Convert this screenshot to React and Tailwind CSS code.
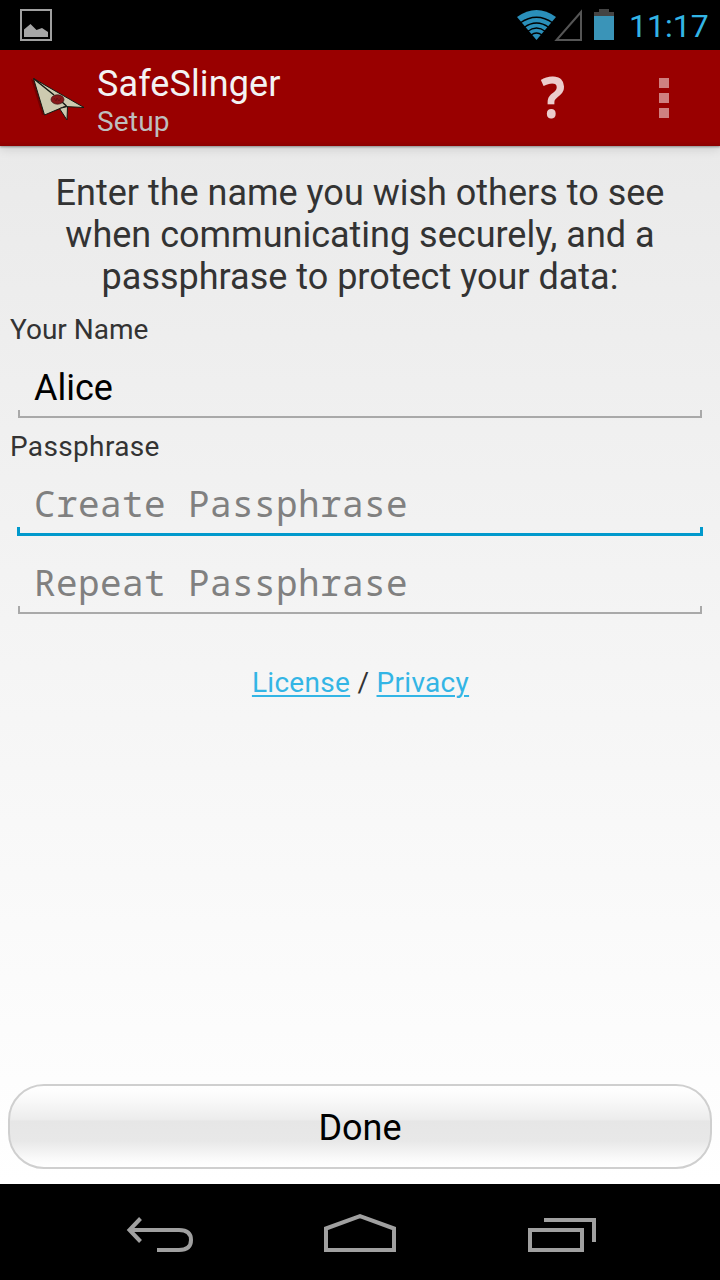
import React from "react";

function StatusBar() {
  return (
    <div className="flex h-[50px] shrink-0 items-center justify-between bg-black pl-5 pr-3">
      <svg width="32" height="32" viewBox="0 0 32 32">
        <rect x="1" y="1" width="30" height="30" fill="none" stroke="#a0a0a0" strokeWidth="2" />
        <path d="M4 28V20.500L10.500 15L16.500 21L22 19L28 23V28Z" fill="#a6a6a6" />
      </svg>
      <div className="flex items-center">
        <svg width="100" height="50" viewBox="0 0 100 50">
          <path d="M0 17Q19.500 3 39 17L19.500 40Z" fill="#2a8fba" />
          <g fill="none" stroke="#000" strokeWidth="1.300">
            <path d="M3 23Q19.500 11.500 36 23" />
            <path d="M7 27.500Q19.500 18.500 32 27.500" />
            <path d="M10.500 31.500Q19.500 24.500 28.500 31.500" />
            <path d="M14 35Q19.500 31 25 35" />
          </g>
          <path d="M64 12V40H39.500Z" fill="none" stroke="#555" strokeWidth="2" />
          <path d="M77 16V12H82V9H92V12H97V16Z" fill="#444" />
          <rect x="77" y="16" width="20" height="24" fill="#3a94b8" />
        </svg>
        <span className="relative top-px ml-[12px] w-[79px] whitespace-nowrap text-[32px] leading-[50px] text-[#33b5e5]">11:17</span>
      </div>
    </div>
  );
}

function PlaneLogo() {
  return (
    <svg width="64" height="64" viewBox="0 0 64 64" className="mb-[10px]">
      <path d="M11 18L22 54L42 48L45 58L46 46L60 46Z" fill="#500000" opacity="0.5" />
      <g stroke="#141a14" strokeWidth="1" strokeLinejoin="round">
        <path d="M13.500 17.500L64 46.500L44.500 45.500L24.500 54Z" fill="#cdcab0" />
        <path d="M39.500 47.500L47 59L47.500 45.500Z" fill="#cdcab0" />
        <path d="M13.500 17.500L34 34M41 40L46.500 45" fill="none" strokeWidth="1.500" />
      </g>
      <ellipse cx="37.500" cy="38.500" rx="6.500" ry="4.700" fill="#861719" stroke="#3d1514" strokeWidth="0.700" />
      <path d="M34 37L36 40L37 37L39 40L41 37" fill="none" stroke="#641012" strokeWidth="0.800" />
    </svg>
  );
}

function ActionBar() {
  return (
    <header className="relative z-10 flex h-24 shrink-0 items-center bg-linear-to-b from-[#990000] from-95% to-[#8c0000] pl-5 shadow-[0_1px_2px_rgba(0,0,0,0.35),0_3px_10px_rgba(0,0,0,0.12)]">
      <PlaneLogo />
      <div className="ml-[13px] flex flex-col pt-1">
        <h1 className="text-[36px] leading-[42px] tracking-[0.1px] text-[#f3f3f3]">SafeSlinger</h1>
        <p className="text-[28px] leading-[33px] tracking-[0.2px] text-[#bebebe]">Setup</p>
      </div>
      <button className="mb-[3px] ml-auto mr-[92px] w-[28px] scale-x-90 text-center font-['Open_Sans',sans-serif] text-[57px] leading-[93px] font-bold text-[#ebcccc]">?</button>
      <button className="mr-[51px] flex flex-col gap-[5px]" aria-label="More options">
        <span className="size-[10px] bg-[#cf8080]" />
        <span className="size-[10px] bg-[#cf8080]" />
        <span className="size-[10px] bg-[#cf8080]" />
      </button>
    </header>
  );
}

function Bracket({ active }) {
  return active ? (
    <div className="mx-[17px] h-[9px] border-x-[3px] border-b-[3px] border-[#0099cc]" />
  ) : (
    <div className="mx-[18px] h-2 border-x-2 border-b-2 border-[#a9a9a9]" />
  );
}

function NavBar() {
  return (
    <nav className="flex h-24 shrink-0 items-center bg-black">
      <svg width="720" height="96" viewBox="0 0 720 96" fill="none" stroke="#a0a0a0" strokeWidth="4">
        <path d="M157 66H179Q191 66 191 56Q191 46 179 46H130" />
        <path d="M140.500 34.500L129.500 46L140.500 57.500" />
        <path d="M326 66V44.500L360 32.200L394 44.500V66Z" />
        <rect x="530" y="46" width="52" height="20" />
        <path d="M544 36H594V58" />
      </svg>
    </nav>
  );
}

export default function App() {
  return (
    <div className="flex h-[1280px] w-[720px] flex-col overflow-hidden font-[Roboto,sans-serif]">
      <StatusBar />
      <ActionBar />
      <main className="flex min-h-0 flex-1 flex-col bg-linear-to-b from-[#eaeaea] via-[#f5f5f5] to-white">
        <p className="mt-[26px] text-center text-[36px] leading-[42px] text-[#333]">
          Enter the name you wish others to see
          <br />
          when communicating securely, and a
          <br />
          passphrase to protect your data:
        </p>
        <label className="mt-[15px] pl-[10px] text-[28px] leading-[33px] text-[#333]">Your Name</label>
        <div className="mt-[21px] h-[43px] pl-[34px] text-[36px] leading-[42px] text-black">Alice</div>
        <Bracket />
        <label className="mt-[12px] pl-[10px] text-[28px] leading-[33px] tracking-[0.35px] text-[#333]">Passphrase</label>
        <div className="mt-[20px] h-[44px] pl-[34px] font-['Noto_Sans_Mono','Droid_Sans_Mono','DejaVu_Sans_Mono',monospace] text-[36px] leading-[42px] tracking-[0.4px] text-[#808080]">
          Create Passphrase
        </div>
        <Bracket active />
        <div className="mt-[26px] h-[44px] pl-[34px] font-['Noto_Sans_Mono','Droid_Sans_Mono','DejaVu_Sans_Mono',monospace] text-[36px] leading-[42px] tracking-[0.4px] text-[#808080]">
          Repeat Passphrase
        </div>
        <Bracket />
        <p className="mt-[52px] pl-px text-center text-[28px] leading-[33px] tracking-[0.3px] text-[#333]">
          <a className="text-[#33b5e5] underline decoration-[1.5px] underline-offset-[3px]">License</a>
          {" / "}
          <a className="text-[#33b5e5] underline decoration-[1.5px] underline-offset-[3px]">Privacy</a>
        </p>
        <button className="mx-2 mt-auto mb-[15px] h-[85px] rounded-[36px] border-2 border-[#cfcfcf] bg-[linear-gradient(to_bottom,#fff_0%,#fafafa_15%,#ececec_42%,#e6e6e6_43%,#e8e8e8_68%,#fafafa_90%,#fff_100%)] pt-[2px] text-[36px] leading-[42px] text-black">
          Done
        </button>
      </main>
      <NavBar />
    </div>
  );
}
